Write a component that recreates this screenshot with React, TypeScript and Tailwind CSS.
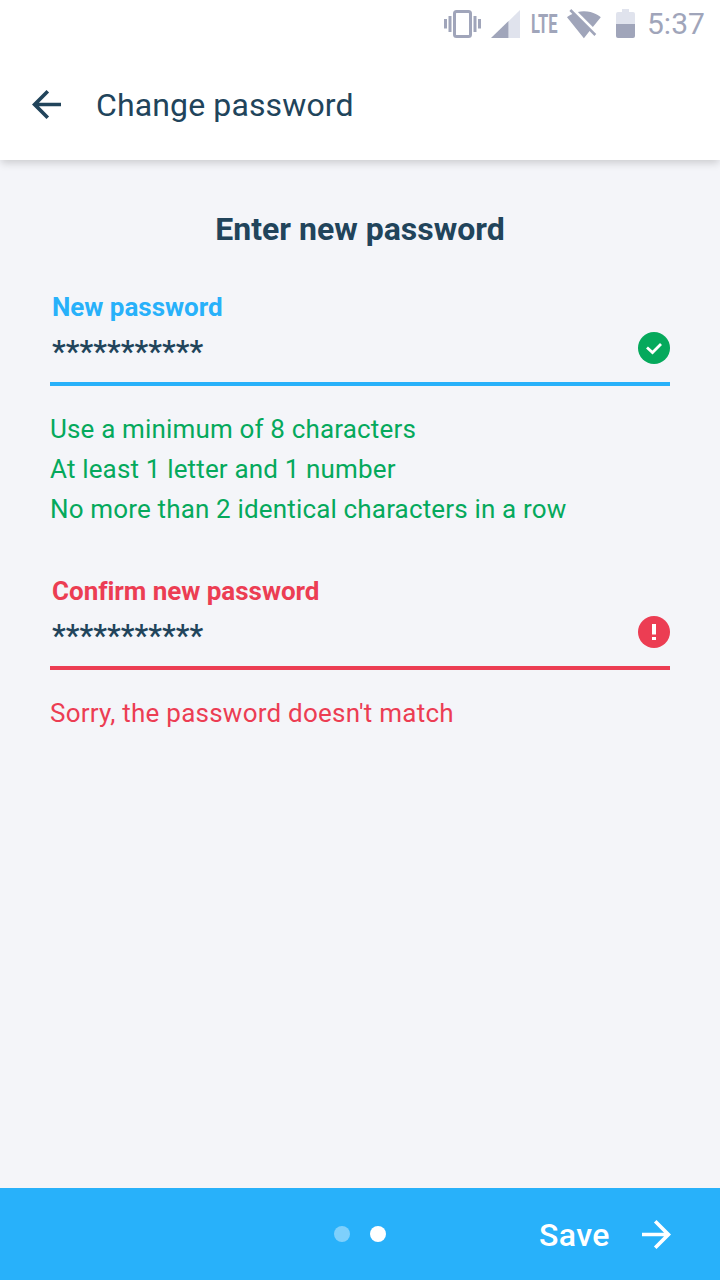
import type { ReactNode } from 'react';

function StatusBar() {
  return (
    <div className="flex h-12 shrink-0 items-center text-[#a0a5ba]">
      <svg className="ml-[440px] h-12 w-[85px]" viewBox="440 0 85 48" fill="currentColor">
        <rect x="454.5" y="11.5" width="16" height="25" rx="2" fill="none" stroke="currentColor" strokeWidth="3" />
        <rect x="444" y="19" width="3" height="9.5" />
        <rect x="448.5" y="16" width="3" height="16" />
        <rect x="473.5" y="16" width="3" height="16" />
        <rect x="478" y="19" width="3" height="9.5" />
        <path d="M508.5 21.3 520 10v28h-11.500z" fill="#e0e3ed" />
        <path d="M491 38 508.500 21V38z" />
      </svg>
      <span className="ml-[6px] w-[29px] origin-left scale-x-[0.66] pt-[2px] text-[25px] leading-[46px] font-bold whitespace-nowrap">LTE</span>
      <svg className="ml-[5px] h-12 w-[77px]" viewBox="565 0 77 48" fill="currentColor">
        <g transform="translate(566.5 7) scale(1.45)">
          <path d="M23.64 7c-.45-.34-4.93-4-11.64-4-1.5 0-2.89.19-4.15.48L18.18 13.8 23.64 7zm-6.6 8.22L3.27 1.44 2 2.72l2.05 2.06C1.91 5.76.59 6.82.36 7l11.630 14.490.01.01.01-.01 3.900-4.860 3.320 3.320 1.270-1.270-3.460-3.460z" />
        </g>
        <path d="M616 24V14q0-2 2-2h4V9h7v3h4q2 0 2 2v10z" fill="#e0e3ed" />
        <path d="M616 24h19v12q0 2-2 2h-15q-2 0-2-2z" />
      </svg>
      <span className="ml-[5px] text-[30px] leading-[48px] whitespace-nowrap">5:37</span>
    </div>
  );
}

function Arrow({ className }: { className: string }) {
  return (
    <svg className={className} viewBox="4 4 16 16" fill="currentColor">
      <path d="M20 11H7.830l5.590-5.590L12 4l-8 8 8 8 1.410-1.410L7.830 13H20v-2z" />
    </svg>
  );
}

function Field({ label, tone, icon }: { label: string; tone: string; icon: ReactNode }) {
  return (
    <div className={`flex h-[99px] flex-col border-b-4 border-current pl-[2px] ${tone}`}>
      <label className="h-10 text-[26px] leading-10 font-bold tracking-[-0.03px] whitespace-nowrap">{label}</label>
      <div className="flex h-[42px] items-center justify-between">
        <span className="pt-[8px] text-[31px] leading-[34px] font-medium text-[#21445b]">***********</span>
        {icon}
      </div>
    </div>
  );
}

export default function App() {
  return (
    <div className="flex h-[1280px] w-[720px] flex-col bg-[#f4f5f9] font-['Roboto',sans-serif] text-[#21445b]">
      <header className="flex h-40 shrink-0 flex-col bg-white shadow-[0_4px_8px_-1px_rgba(0,0,0,0.17)]">
        <StatusBar />
        <div className="flex h-[113px] items-center pl-8">
          <Arrow className="size-[29px]" />
          <h1 className="ml-[35px] pt-[2px] text-[32px] leading-10 tracking-[0.13px] whitespace-nowrap">Change password</h1>
        </div>
      </header>
      <main className="flex grow flex-col px-[50px] pt-[49px]">
        <h2 className="text-center text-[32px] leading-10 font-bold">Enter new password</h2>
        <div className="mt-[38px]">
          <Field
            label="New password"
            tone="text-[#28b1fa]"
            icon={
              <svg className="size-8" viewBox="0 0 32 32">
                <circle cx="16" cy="16" r="16" fill="#05a95c" />
                <path d="m9 15.500 5.500 5 8.500-8.500" fill="none" stroke="white" strokeWidth="2.800" />
              </svg>
            }
          />
          <ul className="mt-[23px] text-[26px] leading-10 tracking-[0.16px] whitespace-nowrap text-[#05a95c]">
            <li>Use a minimum of 8 characters</li>
            <li>At least 1 letter and 1 number</li>
            <li>No more than 2 identical characters in a row</li>
          </ul>
        </div>
        <div className="mt-[42px]">
          <Field
            label="Confirm new password"
            tone="text-[#ec3d53]"
            icon={
              <svg className="size-8" viewBox="0 0 32 32">
                <circle cx="16" cy="16" r="16" fill="#ec3d53" />
                <path d="M14 8h4v10.500h-4zM14 21h4v3h-4z" fill="white" />
              </svg>
            }
          />
          <p className="mt-[23px] text-[26px] leading-10 tracking-[0.24px] whitespace-nowrap text-[#ec3d53]">Sorry, the password doesn't match</p>
        </div>
      </main>
      <footer className="flex h-[92px] shrink-0 items-center bg-[#28b1fa] text-white">
        <div className="ml-[334px] flex gap-5">
          <span className="size-4 rounded-full bg-white/40" />
          <span className="size-4 rounded-full bg-white" />
        </div>
        <button className="ml-[153px] flex h-10 items-center">
          <span className="w-[71px] pt-[2px] text-[32px] leading-10 font-medium tracking-[0.4px] whitespace-nowrap">Save</span>
          <Arrow className="ml-8 size-[29px] rotate-180" />
        </button>
      </footer>
    </div>
  );
}
